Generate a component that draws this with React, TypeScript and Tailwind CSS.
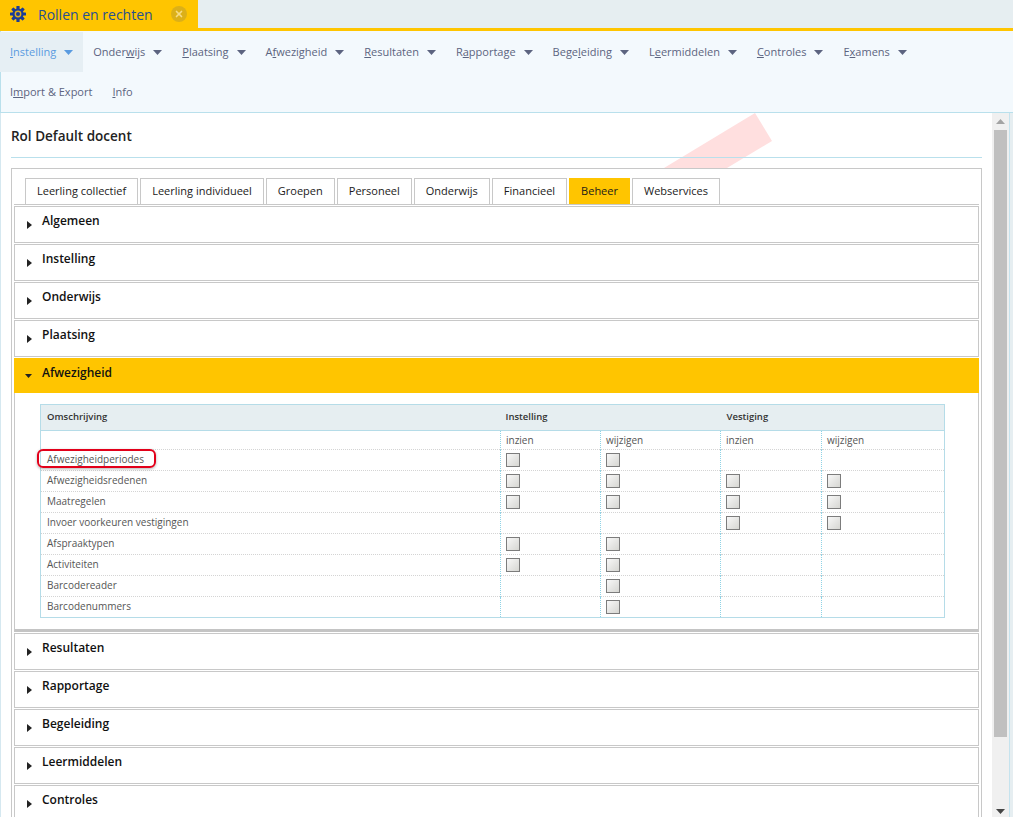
import { X } from "lucide-react";

const navRow1 = [
  { pre: "", u: "I", post: "nstelling", active: true },
  { pre: "Onder", u: "w", post: "ijs" },
  { pre: "", u: "P", post: "laatsing" },
  { pre: "A", u: "f", post: "wezigheid" },
  { pre: "", u: "R", post: "esultaten" },
  { pre: "R", u: "a", post: "pportage" },
  { pre: "Bege", u: "l", post: "eiding" },
  { pre: "L", u: "e", post: "ermiddelen" },
  { pre: "", u: "C", post: "ontroles" },
  { pre: "E", u: "x", post: "amens" },
];

const tabs = [
  "Leerling collectief",
  "Leerling individueel",
  "Groepen",
  "Personeel",
  "Onderwijs",
  "Financieel",
  "Beheer",
  "Webservices",
];

// [instelling inzien, instelling wijzigen, vestiging inzien, vestiging wijzigen]
const rows: { name: string; boxes: boolean[] }[] = [
  { name: "Afwezigheidperiodes", boxes: [true, true, false, false] },
  { name: "Afwezigheidsredenen", boxes: [true, true, true, true] },
  { name: "Maatregelen", boxes: [true, true, true, true] },
  { name: "Invoer voorkeuren vestigingen", boxes: [false, false, true, true] },
  { name: "Afspraaktypen", boxes: [true, true, false, false] },
  { name: "Activiteiten", boxes: [true, true, false, false] },
  { name: "Barcodereader", boxes: [false, true, false, false] },
  { name: "Barcodenummers", boxes: [false, true, false, false] },
];

function Caret({ className }: { className: string }) {
  return (
    <svg width="9" height="5" viewBox="0 0 9 5" className={className}>
      <polygon points="0,0 9,0 4.5,5" fill="currentColor" />
    </svg>
  );
}

function Gear() {
  return (
    <svg width="16" height="16" viewBox="0 0 16 16" className="shrink-0">
      <g fill="#1b3c96">
        <circle cx="8" cy="8" r="5.6" />
        <rect x="6.4" y="0" width="3.2" height="16" rx="0.6" />
        <rect x="6.4" y="0" width="3.2" height="16" rx="0.6" transform="rotate(45 8 8)" />
        <rect x="6.4" y="0" width="3.2" height="16" rx="0.6" transform="rotate(90 8 8)" />
        <rect x="6.4" y="0" width="3.2" height="16" rx="0.6" transform="rotate(135 8 8)" />
      </g>
      <circle cx="8" cy="8" r="3.4" fill="#e0b020" />
      <circle cx="8" cy="8" r="2" fill="#1b3c96" />
    </svg>
  );
}

function NavItem({ pre, u, post, active }: { pre: string; u: string; post: string; active?: boolean }) {
  return (
    <div className={`h-10 px-[10px] flex items-center gap-[8px] ${active ? "bg-[#e6eff4] text-[#5a9be0]" : "text-[#5c6480]"}`}>
      <span>
        {pre}
        <span className="underline">{u}</span>
        {post}
      </span>
      <Caret className="mt-px" />
    </div>
  );
}

function Check() {
  return <div className="w-[14px] h-[14px] border border-[#7c7c7c] bg-linear-to-br from-[#f8f8f8] to-[#d6d6d2]" />;
}

function AccordionItem({ label }: { label: string }) {
  return (
    <div className="h-[37px] mb-px border border-[#c8c8c8] bg-white flex items-start pl-[12px] pt-[5px]">
      <svg width="5" height="8" viewBox="0 0 5 8" className="mt-[9px] shrink-0 text-[#222]">
        <polygon points="0,0 5,4 0,8" fill="currentColor" />
      </svg>
      <span className="ml-[10px] text-[12px] leading-[17px] font-semibold text-[#111]">{label}</span>
    </div>
  );
}

export default function App() {
  return (
    <div className="h-screen overflow-hidden flex flex-col bg-white text-[11px] font-['Open_Sans',sans-serif]">
      <div className="h-[28px] shrink-0 bg-[#e6eef1] flex">
        <div className="w-[198px] bg-[#ffc500] flex items-center pl-[10px]">
          <Gear />
          <span className="ml-[12px] text-[14px] text-[#27508f]">Rollen en rechten</span>
          <span className="ml-[18px] w-[16px] h-[16px] rounded-full bg-[#dcb018] flex items-center justify-center">
            <X size={10} strokeWidth={4} className="text-[#f7dc86]" />
          </span>
        </div>
      </div>
      <div className="h-[3px] shrink-0 bg-[#ffc500]" />

      <div className="h-[82px] shrink-0 bg-[#f3f9fd] border-l border-b border-[#b9e0ec] pt-px">
        <div className="flex -ml-px">
          {navRow1.map((n) => (
            <NavItem key={n.pre + n.u} {...n} />
          ))}
        </div>
        <div className="flex -ml-px text-[#5c6480]">
          <div className="h-10 px-[10px] flex items-center">
            <span>
              I<span className="underline">m</span>port &amp; Export
            </span>
          </div>
          <div className="h-10 px-[10px] flex items-center">
            <span>
              <span className="underline">I</span>nfo
            </span>
          </div>
        </div>
      </div>

      <div className="flex-1 min-h-0 flex">
        <div className="relative flex-1 min-w-0 border-l border-[#d5e8f0] pl-[10px] pr-[10px] overflow-hidden">
          {/* rode lint achter de inhoud */}
          <svg width="120" height="60" viewBox="0 0 120 60" className="absolute left-[660px] top-0">
            <polygon points="94,0 111,28 66,55 3,55" fill="#ffdfdf" />
          </svg>
          <div className="relative">
            <div className="h-[45px] border-b border-[#b9e0ec] pt-[14px] text-[13.5px] leading-[18px] font-semibold text-[#222]">
              Rol Default docent
            </div>
            <div className="mt-[10px] border border-[#c8c8c8] bg-white px-[2px] pt-[9px]">
              <div className="flex pl-[11px] gap-[2px] h-[26px]">
                {tabs.map((t) => (
                  <div
                    key={t}
                    className={`px-[11px] border border-b-0 flex items-center text-[11px] font-medium text-[#1a1a1a] ${
                      t === "Beheer" ? "bg-[#ffc500] border-[#ffc500]" : "border-[#c8c8c8] bg-white"
                    }`}
                  >
                    {t}
                  </div>
                ))}
              </div>
              <div className="border-t border-[#c8c8c8] pt-px">
                {["Algemeen", "Instelling", "Onderwijs", "Plaatsing"].map((l) => (
                  <AccordionItem key={l} label={l} />
                ))}
                <div className="h-[35px] mt-px bg-[#ffc500] flex items-start pl-[11px] pt-[6px]">
                  <svg width="7" height="4" viewBox="0 0 7 4" className="mt-[10px] text-[#222]">
                    <polygon points="0,0 7,0 3.5,4" fill="currentColor" />
                  </svg>
                  <span className="ml-[10px] text-[12px] leading-[17px] font-semibold text-[#111]">Afwezigheid</span>
                </div>
                <div className="h-[239px] border-x border-b-[3px] border-x-[#c8c8c8] border-b-[#c4c4c4] pl-[25px] pr-[33px] pt-[11px]">
                  <table className="w-full table-fixed border-collapse border border-[#b5dce8] text-[10px] text-[#555]">
                    <colgroup>
                      <col className="w-[460px]" />
                      <col className="w-[100px]" />
                      <col className="w-[120px]" />
                      <col className="w-[101px]" />
                      <col />
                    </colgroup>
                    <thead>
                      <tr className="h-[26px] bg-[#e6eef1] border-b border-[#b5dce8] text-[9.5px] font-semibold text-[#333]">
                        <td className="pl-[6px]">Omschrijving</td>
                        <td colSpan={2} className="pl-[5px]">Instelling</td>
                        <td colSpan={2} className="pl-[6px]">Vestiging</td>
                      </tr>
                    </thead>
                    <tbody>
                      <tr className="h-[19px] border-b border-dotted border-[#d4d4d4]">
                        <td />
                        <td className="pl-[5px] border-l border-dotted border-[#8fd3e6]">inzien</td>
                        <td className="pl-[5px] border-l border-dotted border-[#8fd3e6]">wijzigen</td>
                        <td className="pl-[5px] border-l border-dotted border-[#8fd3e6]">inzien</td>
                        <td className="pl-[5px] border-l border-dotted border-[#8fd3e6]">wijzigen</td>
                      </tr>
                      {rows.map((r, i) => (
                        <tr key={r.name} className="h-[21px] border-b border-dotted border-[#d4d4d4] last:border-b-0">
                          <td className="pl-[6px] pb-px relative">
                            {r.name}
                            {i === 0 && (
                              <div className="absolute left-[-4px] top-[-1px] w-[119px] h-[19px] rounded-[6px] border-2 border-[#e2001a] shadow-[0_1px_3px_rgba(0,0,0,0.3)]" />
                            )}
                          </td>
                          {r.boxes.map((b, j) => (
                            <td key={j} className="pl-[5px] border-l border-dotted border-[#8fd3e6]">
                              {b && <Check />}
                            </td>
                          ))}
                        </tr>
                      ))}
                    </tbody>
                  </table>
                </div>
                <div className="pt-[1px]">
                  {["Resultaten", "Rapportage", "Begeleiding", "Leermiddelen", "Controles"].map((l) => (
                    <AccordionItem key={l} label={l} />
                  ))}
                </div>
              </div>
            </div>
          </div>
        </div>

        <div className="w-[21px] shrink-0 flex">
          <div className="w-[17px] bg-[#f0f0f0] flex flex-col items-center">
            <div className="h-[17px] flex items-center justify-center">
              <svg width="9" height="5" viewBox="0 0 9 5" className="text-[#a3a3a3]">
                <polygon points="0,5 9,5 4.5,0" fill="currentColor" />
              </svg>
            </div>
            <div className="w-[13px] h-[607px] bg-[#c0c0c0]" />
            <div className="flex-1 flex items-end pb-[3px]">
              <Caret className="text-[#444]" />
            </div>
          </div>
          <div className="flex-1 bg-[#e6eef1] border-l border-[#c5e3ee]" />
        </div>
      </div>
    </div>
  );
}
